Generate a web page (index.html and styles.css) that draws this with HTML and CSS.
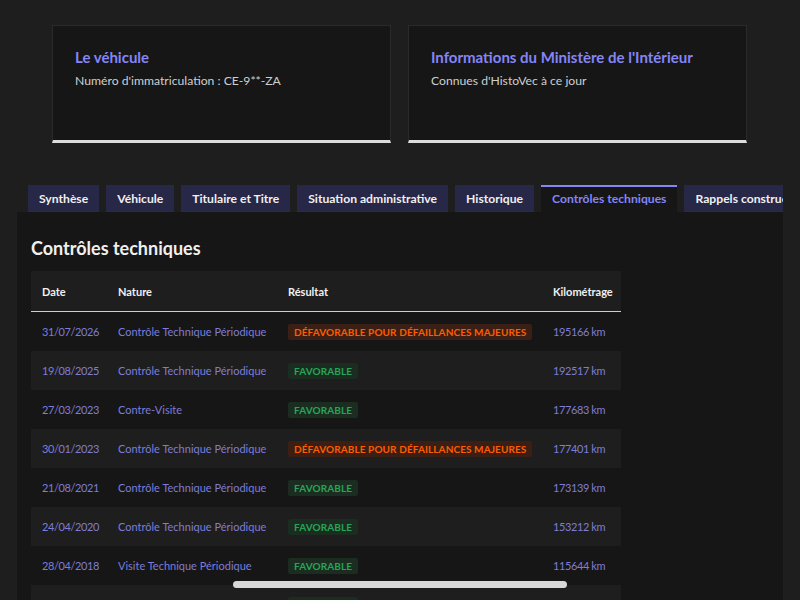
FILE: index.html
```html
<!DOCTYPE HTML>
<html>

<head>
	<meta charset="utf-8">

	<link rel="stylesheet" href="styles.css">
</head>

<body>

	<div class="cards">
		<div class="card">
			<h2 class="card-title">Le véhicule</h2>
			<p class="card-text">Numéro d'immatriculation : CE-9**-ZA</p>
		</div>
		<div class="card">
			<h2 class="card-title">Informations du Ministère de l'Intérieur</h2>
			<p class="card-text">Connues d'HistoVec à ce jour</p>
		</div>
	</div>

	<div class="tabs">
		<ul class="tab-list">
			<li class="tab">Synthèse</li>
			<li class="tab">Véhicule</li>
			<li class="tab">Titulaire et Titre</li>
			<li class="tab">Situation administrative</li>
			<li class="tab">Historique</li>
			<li class="tab active">Contrôles techniques</li>
			<li class="tab">Rappels constructeur</li>
		</ul>

		<div class="panel">
			<h3 class="panel-title">Contrôles techniques</h3>

			<table class="ct-table">
				<thead>
					<tr>
						<th class="col-date">Date</th>
						<th class="col-nature">Nature</th>
						<th class="col-result">Résultat</th>
						<th class="col-km">Kilométrage</th>
					</tr>
				</thead>
				<tbody>
					<tr>
						<td class="num">31/07/2026</td>
						<td>Contrôle Technique Périodique</td>
						<td><span class="badge bad">Défavorable pour défaillances majeures</span></td>
						<td class="num">195166 km</td>
					</tr>
					<tr>
						<td class="num">19/08/2025</td>
						<td>Contrôle Technique Périodique</td>
						<td><span class="badge good">Favorable</span></td>
						<td class="num">192517 km</td>
					</tr>
					<tr>
						<td class="num">27/03/2023</td>
						<td>Contre-Visite</td>
						<td><span class="badge good">Favorable</span></td>
						<td class="num">177683 km</td>
					</tr>
					<tr>
						<td class="num">30/01/2023</td>
						<td>Contrôle Technique Périodique</td>
						<td><span class="badge bad">Défavorable pour défaillances majeures</span></td>
						<td class="num">177401 km</td>
					</tr>
					<tr>
						<td class="num">21/08/2021</td>
						<td>Contrôle Technique Périodique</td>
						<td><span class="badge good">Favorable</span></td>
						<td class="num">173139 km</td>
					</tr>
					<tr>
						<td class="num">24/04/2020</td>
						<td>Contrôle Technique Périodique</td>
						<td><span class="badge good">Favorable</span></td>
						<td class="num">153212 km</td>
					</tr>
					<tr>
						<td class="num">28/04/2018</td>
						<td>Visite Technique Périodique</td>
						<td><span class="badge good">Favorable</span></td>
						<td class="num">115644 km</td>
					</tr>
					<tr>
						<td></td>
						<td></td>
						<td><span class="badge good">Favorable</span></td>
						<td></td>
					</tr>
				</tbody>
			</table>
		</div>
	</div>

	<div class="scrollbar"></div>

</body>

</html>
```

FILE: styles.css
```css
html,
body {
	height: 100%;
	overflow: hidden;
}

body {
	margin: 0;
	background-color: #1e1e1e;
	font-family: "Lato", "Noto Sans", sans-serif;
	color: #cecece;
}

.cards {
	display: flex;
	gap: 17px;
	padding: 25px 0 0 52px;
}

.card {
	width: 293px;
	height: 70px;
	padding: 22px;
	background-color: #161616;
	border: 1px solid #2a2a2a;
	border-bottom: 3px solid #dddddd;
}

.card-title {
	margin: 0 0 7px;
	font-size: 15px;
	font-weight: bold;
	color: #8585f6;
}

.card-text {
	margin: 0;
	font-size: 12.2px;
	color: #cecece;
}

.tabs {
	margin: 42px 0 0 17px;
	width: 766px;
}

.tab-list {
	display: flex;
	gap: 7px;
	margin: 0;
	padding: 0 0 0 11px;
	list-style: none;
	overflow: hidden;
	white-space: nowrap;
}

.tab {
	flex: none;
	height: 27px;
	line-height: 27px;
	padding: 0 11px;
	background-color: #272747;
	color: #f0f0f0;
	font-size: 12.15px;
	font-weight: bold;
	box-shadow: inset 0 -1px 0 #2e2e2e;
}

.tab.active {
	background-color: #161616;
	color: #8585f6;
	box-shadow: inset 0 2px 0 #8585f6;
}

.panel {
	height: 400px;
	padding: 25px 14px 0;
	background-color: #161616;
}

.panel-title {
	margin: 0 0 12px;
	font-size: 18px;
	font-weight: bold;
	color: #f0f0f0;
}

.ct-table {
	width: 590px;
	table-layout: fixed;
	border-collapse: collapse;
	font-size: 11px;
}

.ct-table th {
	height: 40px;
	padding: 0 11px;
	text-align: left;
	background-color: #1e1e1e;
	color: #f0f0f0;
	font-size: 11px;
	font-weight: bold;
	border-bottom: 1px solid #cecece;
	white-space: nowrap;
}

.ct-table td {
	height: 39px;
	padding: 0 11px;
	color: #7d7dd8;
	white-space: nowrap;
}

.ct-table td.num {
	letter-spacing: -0.4px;
}

.ct-table tbody tr:nth-child(even) {
	background-color: #1e1e1e;
}

.col-date {
	width: 54px;
}

.col-nature {
	width: 148px;
}

.col-result {
	width: 243px;
}

.col-km {
	width: 57px;
}

.badge {
	display: inline-block;
	padding: 2px 6px;
	border-radius: 2px;
	font-size: 10px;
	font-weight: bold;
	letter-spacing: 0.1px;
	text-transform: uppercase;
}

.badge.bad {
	background-color: #3b1f15;
	color: #fc5d00;
}

.badge.good {
	background-color: #1b2c20;
	color: #27a658;
}

.scrollbar {
	position: fixed;
	left: 233px;
	bottom: 12px;
	width: 334px;
	height: 7px;
	border-radius: 4px;
	background-color: #d8d8d8;
}
```
